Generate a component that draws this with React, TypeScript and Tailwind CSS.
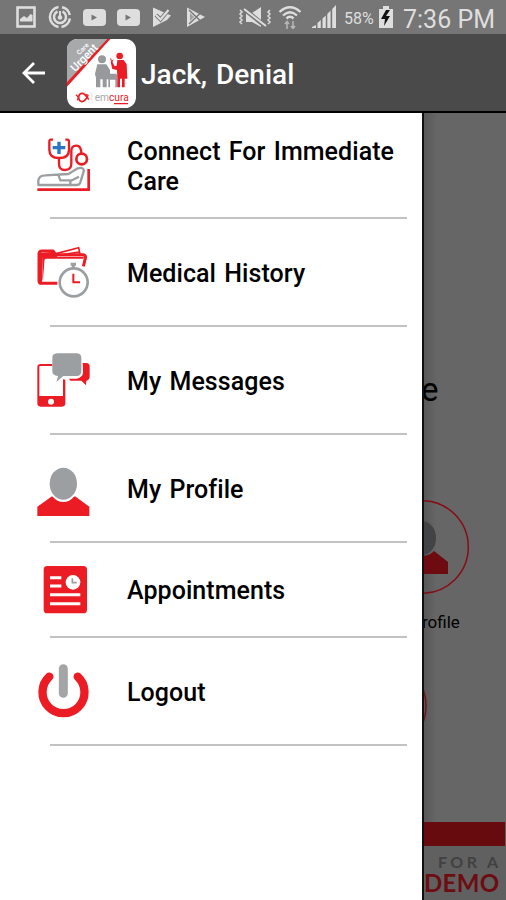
import type { ReactNode } from 'react';

const RED = '#ec1c24';
const GRAY = '#9b9fa1';

function StatusBar() {
  return (
    <div className="flex items-center h-[34px] w-full shrink-0 bg-[#767676] text-[#dedede] pl-4">
      <div className="flex items-center">
        <svg className="w-5 h-[22px]" viewBox="0 0 20 22" fill="none" stroke="currentColor">
          <rect x="1.500" y="1.500" width="17" height="19" strokeWidth="2.600" />
          <path d="M4 15.500V13l4-3 3 2 3.500-4 2 1v6.500z" fill="currentColor" stroke="none" />
        </svg>
        <svg className="w-6 h-6 ml-3" viewBox="0 0 24 24" fill="none" stroke="currentColor">
          <path d="M14 2.200A10 10 0 0 1 21.800 10M21.900 13.500A10 10 0 0 1 13.500 21.900M10.500 21.900A10 10 0 0 1 10.500 2.100" strokeWidth="2.500" />
          <path d="M14.500 6.500A6 6 0 1 1 9.500 6.500" strokeWidth="2.500" />
          <path d="M12 6v6" strokeWidth="2" />
          <circle cx="12" cy="12.500" r="2.300" fill="currentColor" stroke="none" />
        </svg>
        <YoutubeIcon />
        <YoutubeIcon />
        <svg className="w-5 h-5 ml-3" viewBox="0 0 20 20" fill="none" stroke="currentColor">
          <path d="M1 0.500L19 8.500L15 13L1 20z" fill="currentColor" stroke="none" />
          <path d="M4 8l4.500 4.500L16.500 3" stroke="#767676" strokeWidth="4" />
          <path d="M4 8l4.500 4.500L16.500 3" strokeWidth="2.200" />
        </svg>
        <svg className="w-5 h-5 ml-3.5" viewBox="0 0 20 20" fill="none" stroke="currentColor">
          <path d="M1 0.500L19 10L1 20z" fill="currentColor" stroke="none" />
          <path d="M3 3l11 10.500M3 17l11-10.500" stroke="#767676" strokeWidth="1.400" />
          <path d="M4 6v8l4-4z" fill="#a0a0a0" stroke="none" />
        </svg>
      </div>
      <div className="flex items-center ml-8">
        <svg className="w-[34px] h-[22px]" viewBox="0 0 34 22" fill="none" stroke="currentColor">
          <path d="M2 4l2 2-2 2 2 2-2 2 2 2-2 2 2 2M32 4l-2 2 2 2-2 2 2 2-2 2 2 2-2 2" strokeWidth="1.500" />
          <path d="M8 7h6l9-6v20l-9-5H8z" fill="currentColor" stroke="none" />
          <path d="M6 3l21 17" stroke="#767676" strokeWidth="4.500" />
          <path d="M6 3l22 17" strokeWidth="2" />
        </svg>
        <svg className="w-6 h-6 ml-1.5" viewBox="0 0 24 24" fill="none" stroke="currentColor">
          <path d="M1.500 7Q12-2.500 22.500 7" strokeWidth="2.300" />
          <path d="M5 10.500Q12 4 19 10.500" strokeWidth="2.200" />
          <path d="M8.500 13.500Q12 10 15.500 13.500" strokeWidth="2.500" />
          <path d="M9 24v-7M7 19l2-2.500 2 2.500M15 16v7M13 21l2 2.500 2-2.500" stroke="#b5b5b5" strokeWidth="1.600" />
        </svg>
        <svg className="w-6 h-6 ml-2.5" viewBox="0 0 24 24" fill="currentColor">
          <path d="M0 23h4v-3l-4 2zM5.500 23h3.300v-8l-3.300 3zM10.500 23h3.300V10.500l-3.300 3zM15.300 23h3.300V5.500l-3.300 3.500zM20.200 23h3.800V0l-3.800 4z" />
        </svg>
        <span className="font-['Roboto',sans-serif] text-base leading-none ml-2 w-8 pt-[3px]">58%</span>
        <svg className="w-4 h-[22px] ml-0.5" viewBox="0 0 16 22" fill="currentColor">
          <path d="M5 0h6v3h4v19H1V3h4z" />
          <path d="M8 4L3 13h4l-1 7 6-10H8l4-6z" fill="#111" />
        </svg>
        <span className="font-['Roboto',sans-serif] text-[25px] leading-none ml-[9px] pt-[5px] whitespace-nowrap">7:36 PM</span>
      </div>
    </div>
  );
}

function YoutubeIcon() {
  return (
    <svg className="w-[23px] h-[17px] ml-[11px]" viewBox="0 0 23 17">
      <rect width="23" height="17" rx="4" fill="currentColor" />
      <path d="M8.500 5.500l5.500 3-5.500 3z" fill="#767676" />
    </svg>
  );
}

function AppLogo() {
  return (
    <svg className="w-[69px] h-[69px] shrink-0 mt-px" viewBox="22 8 207 207">
      <defs>
        <clipPath id="logo-clip">
          <rect x="22" y="8" width="207" height="207" rx="32" />
        </clipPath>
      </defs>
      <g clipPath="url(#logo-clip)">
        <rect x="22" y="8" width="207" height="207" fill="#fff" />
        <path d="M22 8H148L22 142z" fill="#a7a9ab" />
        <path d="M152 8L22 151V138L143 8z" fill={RED} />
        <g fill="#fff" fontFamily="Roboto, sans-serif" fontWeight="500">
          <text fontSize="20" transform="translate(59 57) rotate(-45)" textLength="42">Care</text>
          <text fontSize="34" transform="translate(47 108) rotate(-46)" textLength="100" lengthAdjust="spacingAndGlyphs">Urgent</text>
        </g>
        <g fill="#97999c">
          <circle cx="127" cy="69" r="12" />
          <path d="M113 84h27l11 17v11h19l3 6v35h-6v-23h-16v23h-5v-24h-5v24h-12v-24h-7v24h-13v-28l-3-12z" />
        </g>
        <g fill={RED}>
          <circle cx="180" cy="59" r="10" />
          <path d="M173 71h19l9 13 2 43h-8v26h-8v-26h-6v26h-8v-30l-1-22-14-3-5-21 5-1 7 14 6-2z" />
        </g>
        <path d="M153 66l3 12 4-8" fill="none" stroke={RED} strokeWidth="3" />
        <path d="M60 174Q67 168 75 174L83 183L75 192Q67 199 60 193L56 183z" fill="none" stroke={RED} strokeWidth="5" />
        <path d="M49 175l8 8-4 9M79 174l6 3-2 6 4 7" fill="none" stroke={RED} strokeWidth="4" />
        <path d="M97 168v33" stroke="#d8d8d8" strokeWidth="2" />
        <text x="105" y="193" fontFamily="Roboto, sans-serif" fontSize="33" fill="#a7a9ab" textLength="102" lengthAdjust="spacingAndGlyphs">
          em<tspan fill={RED}>cura</tspan>
        </text>
        <path d="M163 202h42" stroke={RED} strokeWidth="4" />
      </g>
    </svg>
  );
}

function Header() {
  return (
    <header className="flex items-center h-[79px] w-full shrink-0 bg-[#4a4a4a] border-b-2 border-black pl-[22px]">
      <button className="text-white mr-[22px]">
        <svg className="w-[23px] h-[23px]" viewBox="0 0 23 23" fill="none" stroke="currentColor" strokeWidth="2.800">
          <path d="M23 12H2M12 2l-10 10 10 10" />
        </svg>
      </button>
      <AppLogo />
      <h1 className="font-['Roboto',sans-serif] font-medium text-[28px] leading-none text-white ml-[5px] mt-1 [word-spacing:2px]">Jack, Denial</h1>
    </header>
  );
}

const icons: Record<string, ReactNode> = {
  care: (
    <svg className="w-14 h-14" viewBox="48 51 168 168" fill="none">
      <path d="M99 59H92Q88 59 88 66V89Q88 114 117 114Q147 114 147 89V66Q147 59 142 59H136" stroke={RED} strokeWidth="7" />
      <path d="M117 114V131Q117 150 135 150Q154 150 154 130V93Q154 77 169 77Q184 77 184 101" stroke={RED} strokeWidth="7" />
      <circle cx="185" cy="117" r="16" stroke={RED} strokeWidth="8" />
      <path d="M117 65V102M98 83H136" stroke="#2877c5" strokeWidth="10" />
      <path d="M55 195V181Q57 166 76 166L145 162 171 146Q187 139 192 151L180 190Q177 195 169 195ZM116 167L121 181H156L177 170M151 182V194" stroke={GRAY} strokeWidth="7" strokeLinejoin="round" />
      <path d="M52 209H206V147" stroke={RED} strokeWidth="8" />
    </svg>
  ),
  history: (
    <svg className="w-14 h-14" viewBox="48 42 168 168" fill="none">
      <path d="M112 160H65Q57 160 57 152V72Q57 63 66 63H99L107 74H190Q198 76 196 85L190 109" stroke={RED} strokeWidth="9" />
      <path d="M68 76V145L65 159L59 154V69L104 65L112 80H191V86H77Q73 86 73 94L70 145" fill={RED} />
      <path d="M108 71L176 53L180 73M133 73L177 66" stroke={RED} strokeWidth="5" />
      <circle cx="161" cy="157" r="42" fill="#fff" stroke={GRAY} strokeWidth="8" />
      <path d="M160 113V105M152 103H168" stroke={GRAY} strokeWidth="9" />
      <path d="M160 131V157H180" stroke={RED} strokeWidth="6" />
    </svg>
  ),
  messages: (
    <svg className="w-14 h-14" viewBox="48 36 168 168">
      <path d="M62 72H97V78H60Q58 78 58 81V168H129V118L136 119V190Q136 200 126 200H62Q52 200 52 190V82Q52 72 62 72Z" fill={RED} />
      <circle cx="93" cy="185" r="9" fill="#fff" />
      <path d="M188 69H199Q209 69 209 80V109Q209 121 199 122L198 136L184 122H151L147 116H170Q189 112 189 97Z" fill={RED} />
      <path d="M111 40H171Q184 41 184 54V93Q184 108 170 108H130L109 126L114 108Q97 107 97 94V53Q97 41 111 40Z" fill={GRAY} />
    </svg>
  ),
  profile: (
    <svg className="w-14 h-14" viewBox="48 30 168 168">
      <path d="M52 203V170L96 139L130 151L165 139L208 170V203Z" fill={RED} />
      <ellipse cx="130" cy="102" rx="45" ry="54" fill="#fff" />
      <ellipse cx="130" cy="101" rx="41" ry="48" fill={GRAY} />
    </svg>
  ),
  appointments: (
    <svg className="w-14 h-14" viewBox="48 35 168 168">
      <rect x="71" y="47" width="130" height="142" rx="11" fill={RED} />
      <path d="M90 82H124M90 107H124M90 133H181M90 160H181" stroke="#fff" strokeWidth="9" />
      <circle cx="159" cy="96" r="22" fill="#fff" />
      <path d="M157 84V97H170" fill="none" stroke={GRAY} strokeWidth="5" />
    </svg>
  ),
  logout: (
    <svg className="w-14 h-14" viewBox="48 39 168 168" fill="none" strokeLinecap="round">
      <path d="M88 80A63 63 0 1 0 173 80" stroke={RED} strokeWidth="25" />
      <path d="M130 56V130" stroke="#a3a5a6" strokeWidth="27" />
    </svg>
  ),
};

const menuItems = [
  { id: 'care', label: 'Connect For Immediate Care', height: 'h-[106px]' },
  { id: 'history', label: 'Medical History', height: 'h-[108px]' },
  { id: 'messages', label: 'My Messages', height: 'h-[108px]' },
  { id: 'profile', label: 'My Profile', height: 'h-[108px]' },
  { id: 'appointments', label: 'Appointments', height: 'h-[95px]' },
  { id: 'logout', label: 'Logout', height: 'h-[108px]' },
];

function Drawer() {
  return (
    <nav className="w-[422px] shrink-0 bg-white">
      {menuItems.map((item) => (
        <div key={item.id} className={`flex flex-col ${item.height}`}>
          <div className="flex flex-1 items-center pl-9">
            {icons[item.id]}
            <span className="font-['Roboto',sans-serif] font-medium text-[25px] leading-[30px] text-black ml-[35px] mt-[3px] w-[280px] tracking-[0.06px] [word-spacing:2px]">
              {item.label}
            </span>
          </div>
          <div className="h-0.5 ml-[50px] mr-[15px] bg-[#c2c2c2]" />
        </div>
      ))}
    </nav>
  );
}

// The part of the home screen left visible beside the open drawer
function DimmedHome() {
  return (
    <main className="flex flex-col flex-1 min-w-0 overflow-hidden bg-linear-to-r from-[#585858] to-[#666] to-15% border-l-2 border-[#111] font-['Roboto',sans-serif] text-black">
      <div className="h-9 mt-[259px] text-[33px] leading-9 -ml-[3px]">e</div>
      <svg className="w-[82px] h-24 mt-[91px]" viewBox="424 499 82 96" fill="none">
        <circle cx="422" cy="547" r="46.300" stroke="#870d15" strokeWidth="1.500" />
        <ellipse cx="422" cy="538" rx="14" ry="17" fill="#424344" />
        <path d="M408 574V561L421 556Q430 556 434 551L448 562V574Z" fill="#6e0b10" />
      </svg>
      <div className="text-[17px] leading-5 mt-[17px] -ml-0.5">rofile</div>
      <svg className="w-[82px] h-10 mt-[54px]" viewBox="424 686 82 40" fill="none">
        <circle cx="380" cy="706" r="46" stroke="#780d13" strokeWidth="1.500" />
      </svg>
      <footer className="mt-auto h-[78px] bg-[#606060] font-['Lato',sans-serif]">
        <div className="h-6 mr-px bg-[#670b0f]" />
        <div className="text-base leading-4 h-4 font-bold text-[#414141] tracking-[3.4px] whitespace-nowrap mt-2 ml-[14px]">FOR A</div>
        <div className="text-2xl leading-6 h-6 font-bold text-[#6d0d12] whitespace-nowrap tracking-[0.3px] mt-px">DEMO</div>
      </footer>
    </main>
  );
}

export default function App() {
  return (
    <div className="flex flex-col w-[506px] h-[900px] overflow-hidden bg-[#666]">
      <StatusBar />
      <Header />
      <div className="flex flex-1 min-h-0">
        <Drawer />
        <DimmedHome />
      </div>
    </div>
  );
}
